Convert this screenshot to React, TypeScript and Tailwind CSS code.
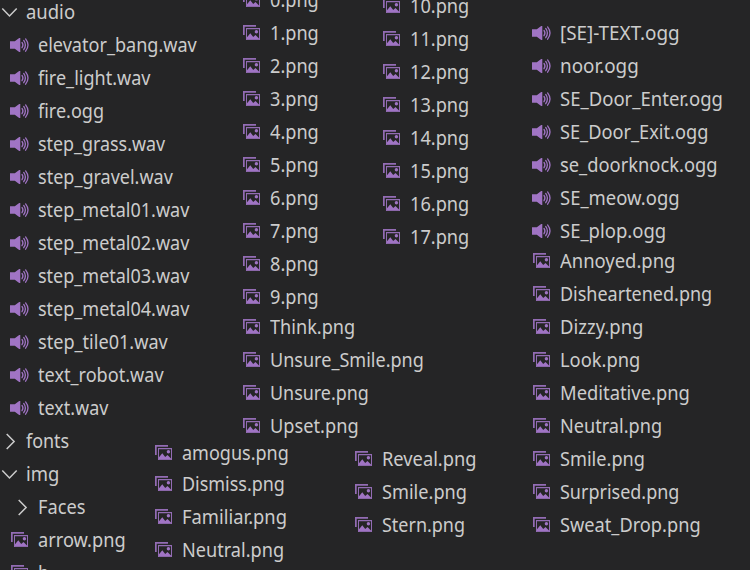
import { useLayoutEffect, useRef, useState } from "react";

type Kind = "audio" | "image" | "open" | "closed";

// Glyph advances in 1/2048 em; labels are fitted to the sum of these.
const ADVANCES: Record<string, number> = {
  a: 1042, b: 1204, c: 946, d: 1206, e: 1072, f: 641, g: 1206, h: 1158, i: 496, j: 496,
  k: 1018, l: 496, m: 1764, n: 1158, o: 1200, p: 1204, q: 1206, r: 711, s: 869, t: 694,
  u: 1158, v: 981, w: 1480, x: 940, y: 991, z: 926, ".": 444, _: 850, "-": 819,
  A: 1321, D: 1436, E: 1036, F: 999, L: 964, M: 1839, N: 1532, R: 1225, S: 1087,
  T: 1073, U: 1407, X: 1208, "[": 618, "]": 618,
};

function labelWidth(text: string) {
  return ([...text].reduce((sum, ch) => sum + (ADVANCES[ch] ?? 1104), 0) * 19.5) / 2048;
}

function Label({ text }: { text: string }) {
  const ref = useRef<HTMLSpanElement>(null);
  const [scale, setScale] = useState(1);
  useLayoutEffect(() => {
    if (ref.current) setScale(labelWidth(text) / ref.current.offsetWidth);
  }, [text]);
  return (
    <span ref={ref} className="block origin-left whitespace-nowrap" style={{ transform: `scaleX(${scale})` }}>
      {text}
    </span>
  );
}

function ImageIcon() {
  return (
    <svg className="mt-2 ml-px h-[15px] w-[17px] shrink-0" viewBox="0 0 17 15" fill="#a074c4">
      <path d="M0 0H13V1.7H1.7V10H0Z" opacity=".9" />
      <path fillRule="evenodd" d="M3 3H17V15H3ZM4 4.2V14.2H16V4.2Z" opacity=".9" />
      <path d="M4 14.4V12.2L7.3 8.3L10.2 12L12.5 10.1L16 13.4V14.4Z" />
      <circle cx="13.4" cy="6.8" r="1.7" />
    </svg>
  );
}

function AudioIcon() {
  return (
    <svg className="mt-[9px] h-[14px] w-[19px] shrink-0" viewBox="0 0 19 14" fill="none" stroke="#a074c4" strokeLinecap="round">
      <path d="M0 3.3H4.8L9.2 0H10.3V14H9.2L4.8 10.8H0Z" fill="#a074c4" stroke="none" />
      <path d="M12 4.4Q13.9 7 12 9.7" strokeWidth="1.3" />
      <path d="M13.7 2.4Q17.1 7 13.7 11.7" strokeWidth="1.3" />
      <path d="M15.6 .9Q20.4 7 15.6 13.2" strokeWidth="1.3" />
    </svg>
  );
}

function Chevron({ open }: { open: boolean }) {
  return (
    <svg className="h-[33px] w-[18px] shrink-0" viewBox="0 0 18 33" fill="none" stroke="#cccccc" strokeWidth="1.5">
      <path d={open ? "M2.3 12.5L9.5 20L16.7 12.5" : "M6.7 9L14.1 16.5L6.7 24"} />
    </svg>
  );
}

function Row({ kind, name, nested = false }: { kind: Kind; name: string; nested?: boolean }) {
  const folder = kind === "open" || kind === "closed";
  const pad = folder ? (nested ? "pl-3" : "") : "";
  return (
    <li className={`flex h-[33px] shrink-0 items-start ${pad}`}>
      <div className={`flex shrink-0 ${folder ? "w-[26px]" : "w-7"}`}>
        {kind === "audio" && <AudioIcon />}
        {kind === "image" && <ImageIcon />}
        {folder && <Chevron open={kind === "open"} />}
      </div>
      <Label text={name} />
    </li>
  );
}

function Files({ kind, names, className = "" }: { kind: Kind; names: string[]; className?: string }) {
  return (
    <ul className={`flex flex-col ${className}`}>
      {names.map((name) => (
        <Row key={name} kind={kind} name={name} />
      ))}
    </ul>
  );
}

const AUDIO = [
  "elevator_bang.wav", "fire_light.wav", "fire.ogg", "step_grass.wav", "step_gravel.wav",
  "step_metal01.wav", "step_metal02.wav", "step_metal03.wav", "step_metal04.wav",
  "step_tile01.wav", "text_robot.wav", "text.wav",
];
const LOW = ["0.png", "1.png", "2.png", "3.png", "4.png", "5.png", "6.png", "7.png", "8.png", "9.png"];
const HIGH = ["10.png", "11.png", "12.png", "13.png", "14.png", "15.png", "16.png", "17.png"];
const SOUNDS = [
  "[SE]-TEXT.ogg", "noor.ogg", "SE_Door_Enter.ogg", "SE_Door_Exit.ogg",
  "se_doorknock.ogg", "SE_meow.ogg", "SE_plop.ogg",
];
const MOODS = [
  "Annoyed.png", "Disheartened.png", "Dizzy.png", "Look.png", "Meditative.png",
  "Neutral.png", "Smile.png", "Surprised.png", "Sweat_Drop.png",
];

export default function App() {
  return (
    <div className="flex h-[570px] w-[750px] overflow-hidden bg-[#252526] font-['Noto_Sans','Open_Sans',sans-serif] text-[19px] leading-[32px] text-[#cccccc]">
      <nav className="-mt-1 w-[154px] shrink-0">
        <ul>
          <Row kind="open" name="audio" />
        </ul>
        <Files kind="audio" names={AUDIO} className="pl-2.5" />
        <ul>
          <Row kind="closed" name="fonts" />
          <Row kind="open" name="img" />
          <Row kind="closed" name="Faces" nested />
        </ul>
        <Files kind="image" names={["arrow.png", "b"]} className="pl-2.5" />
      </nav>

      <main className="w-[378px] shrink-0">
        <div className="flex h-[437px] pl-22">
          <div className="-mt-4 w-[140px] shrink-0">
            <Files kind="image" names={LOW} />
            <Files kind="image" names={["Think.png", "Unsure_Smile.png", "Unsure.png", "Upset.png"]} className="-mt-[3px]" />
          </div>
          <Files kind="image" names={HIGH} className="-mt-2.5" />
        </div>
        <div className="flex">
          <div className="w-[200px] shrink-0">
            <Files kind="image" names={["amogus.png"]} />
            <Files kind="image" names={["Dismiss.png", "Familiar.png", "Neutral.png"]} className="-mt-0.5" />
          </div>
          <Files kind="image" names={["Reveal.png", "Smile.png", "Stern.png"]} className="mt-1.5" />
        </div>
      </main>

      <aside className="mt-[17px] shrink-0">
        <Files kind="audio" names={SOUNDS} />
        <Files kind="image" names={MOODS} className="-mt-[3px]" />
      </aside>
    </div>
  );
}
